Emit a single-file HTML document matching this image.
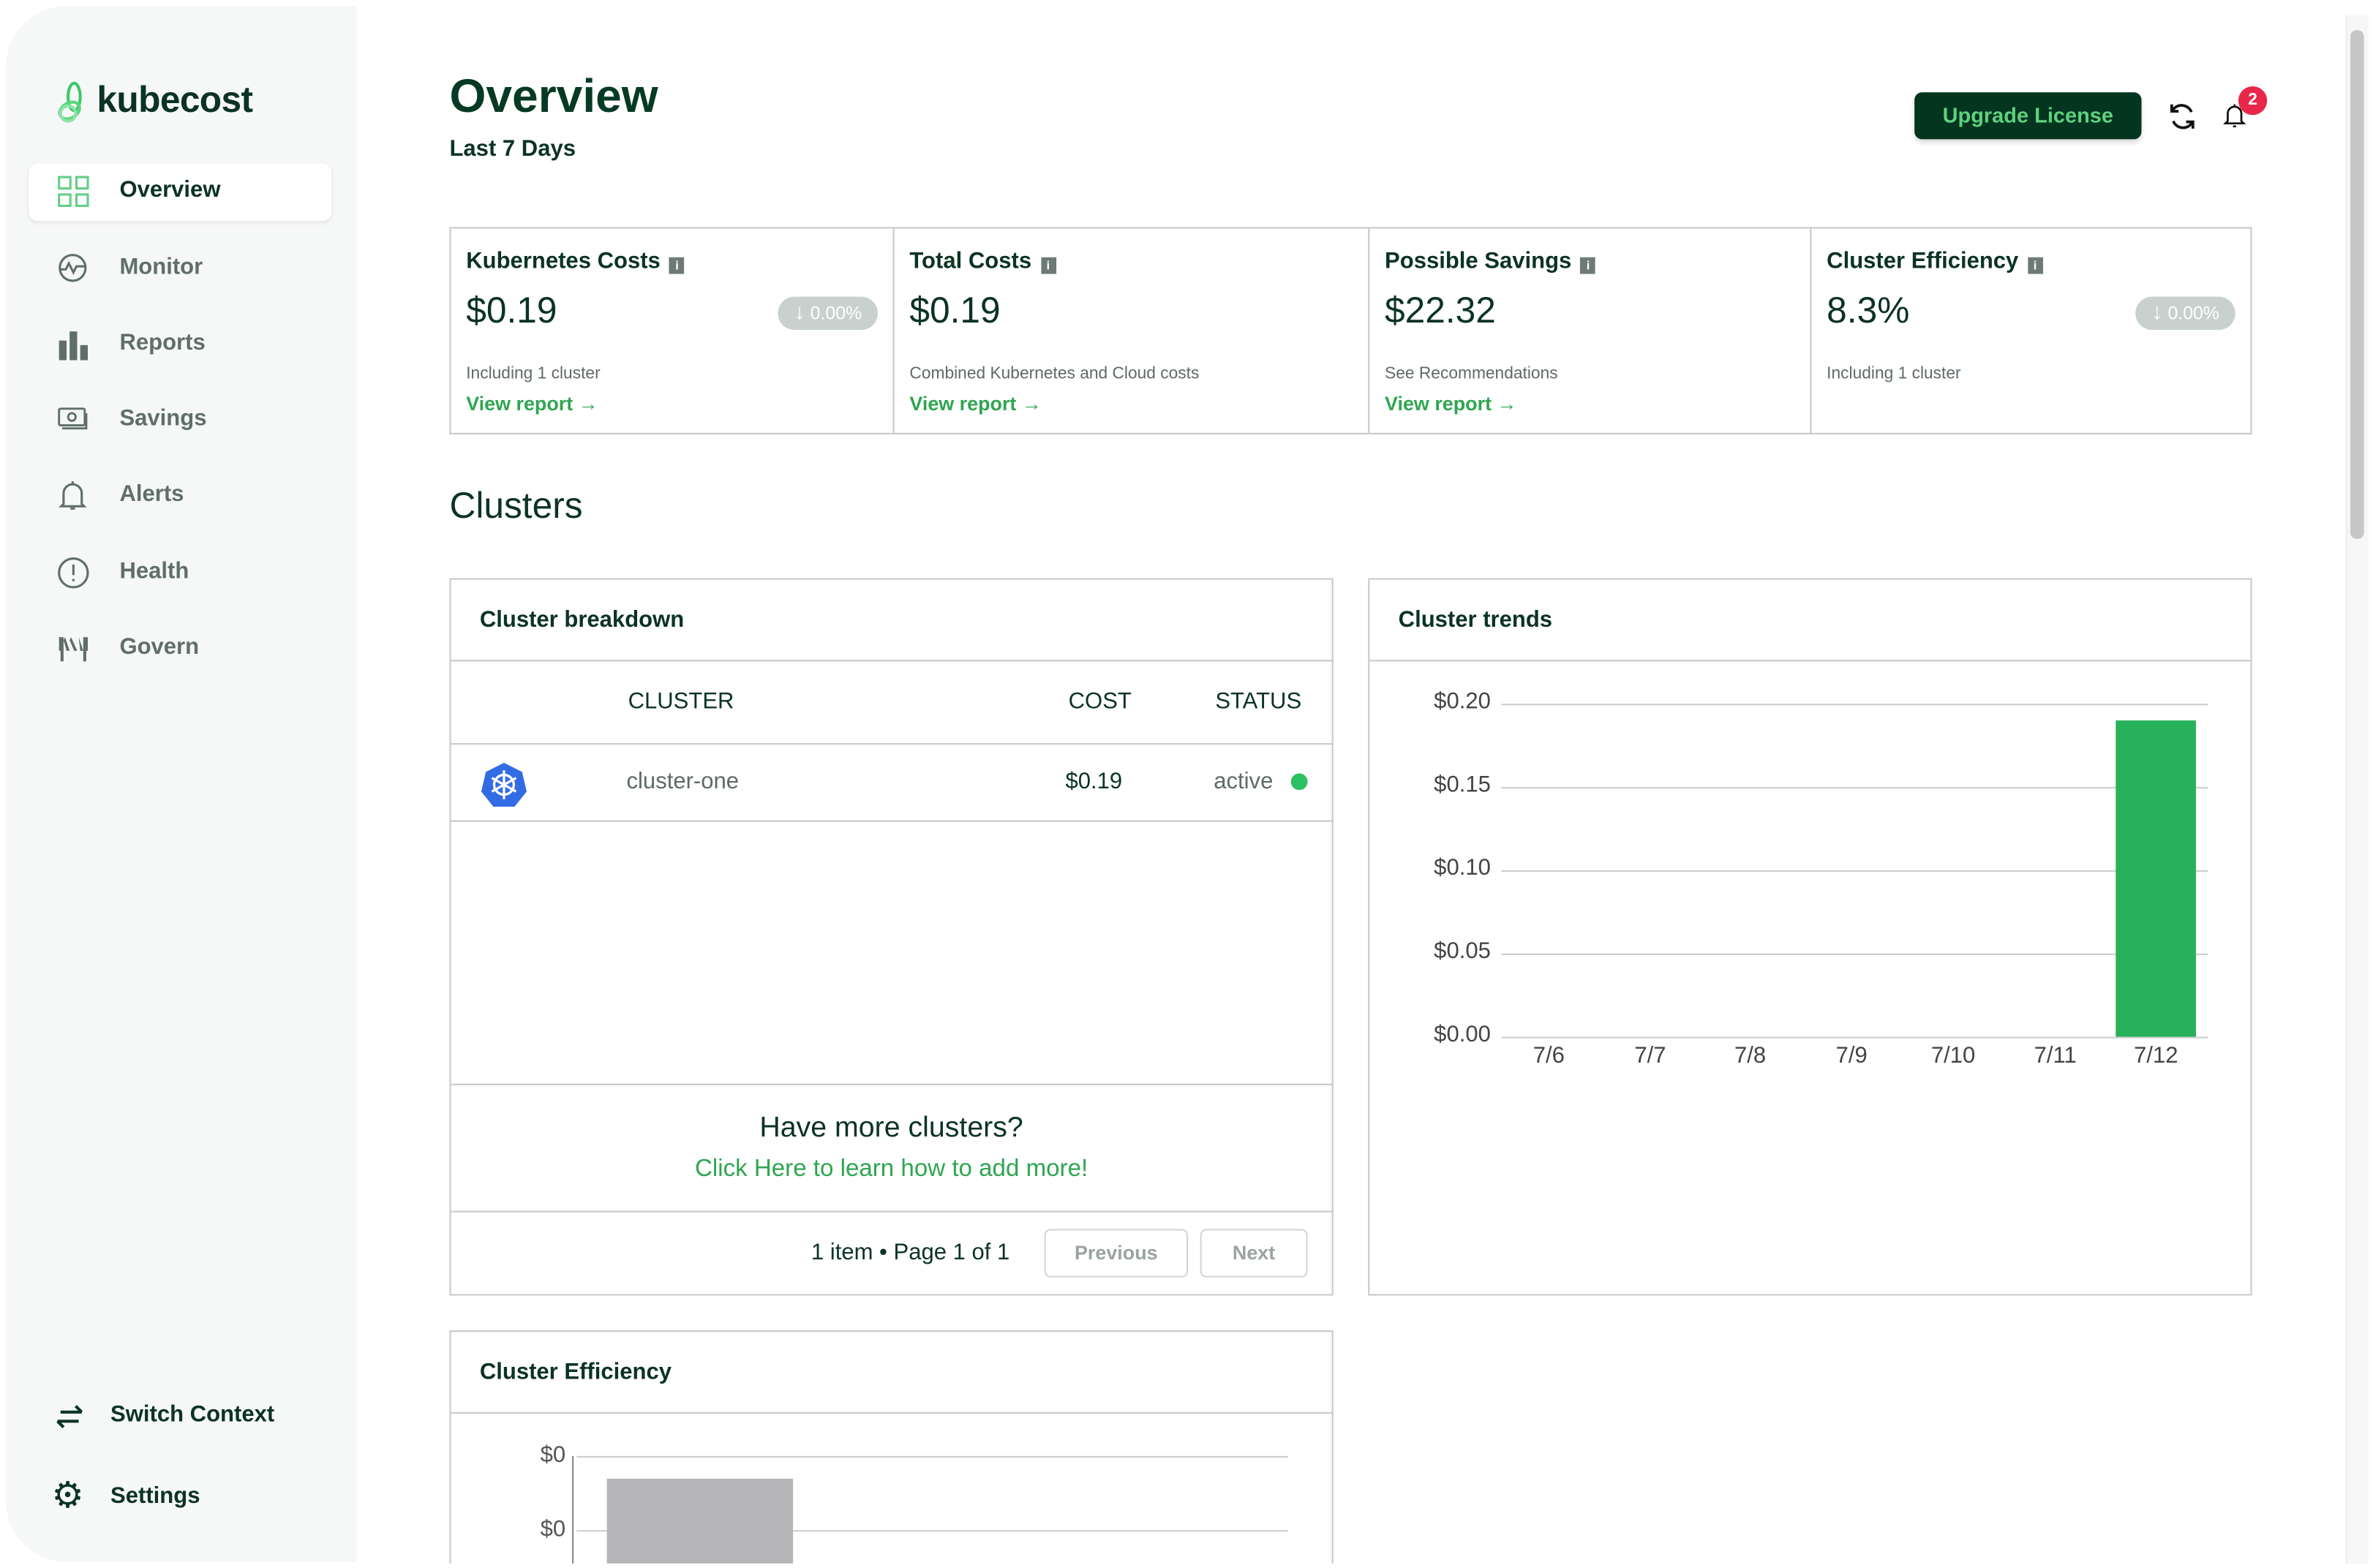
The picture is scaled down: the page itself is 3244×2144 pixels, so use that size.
<!DOCTYPE html>
<html><head><meta charset="utf-8"><style>
*{box-sizing:border-box;margin:0;padding:0}
html,body{width:3244px;height:2144px;overflow:hidden;background:#fff}
#w{position:absolute;left:0;top:0;width:1568px;height:1033px;overflow:hidden;transform:scale(2.0689,2.0695);transform-origin:0 0;font-family:"Liberation Sans",sans-serif;color:#0b3323;background:#fff}
.a{position:absolute}
.side{left:4px;top:4px;width:232px;height:1028px;background:#f6f7f7;border-radius:40px 0 0 40px}
.nav{position:absolute;left:79px;font-size:15px;font-weight:bold;color:#5f6f68}
.ni{position:absolute;left:38px}
.card{position:absolute;top:150px;height:137px;border:1px solid #c8c8c8;background:#fff}
.ct{position:absolute;left:10px;top:13px;font-size:15px;font-weight:bold;color:#0b3323;white-space:nowrap}
.ct i{display:inline-block;width:10px;height:11px;background:#6d7a76;color:#fff;font-size:8px;font-style:normal;text-align:center;line-height:11px;margin-left:6px;vertical-align:-1px}
.cv{position:absolute;left:10px;top:41px;font-size:24px;color:#0b3323}
.cs{position:absolute;left:10px;top:90px;font-size:11px;color:#5f6a66;white-space:nowrap}
.cr{position:absolute;left:10px;top:108px;font-size:13px;font-weight:bold;color:#2ea650;white-space:nowrap}
.bd{position:absolute;right:10px;top:45px;width:66px;height:22px;border-radius:11px;background:#c9d1ce;color:#fff;font-size:12px;line-height:22px;text-align:center}
.bd b{font-size:15px;font-weight:normal}
.pan{position:absolute;border:1px solid #c8c8c8;background:#fff}
.ph{position:absolute;left:0;right:0;top:0;height:54px;border-bottom:1px solid #c8c8c8;font-size:15px;font-weight:bold;padding:18px 0 0 19px}
.hl{position:absolute;height:1px;background:#c8c8c8;left:0;right:0}
.yl{position:absolute;font-size:15px;color:#444;text-align:right;width:50px}
.gl{position:absolute;left:992px;width:467px;height:1px;background:#ccc}
.xl{position:absolute;top:689px;font-size:15px;color:#444}
.btn{position:absolute;top:812px;height:32px;border:1px solid #d5d5d5;border-radius:4px;font-size:13px;font-weight:bold;color:#9aa3a0;text-align:center;line-height:30px}
</style></head><body><div id="w">
<div class="a side"></div>
<svg class="a" style="left:37px;top:54px" width="22" height="28" viewBox="0 0 22 28"><ellipse cx="12" cy="10" rx="4" ry="9" fill="none" stroke="#3ec86a" stroke-width="2"/><ellipse cx="9" cy="19" rx="7" ry="5" fill="none" stroke="#58d77f" stroke-width="2" transform="rotate(-30 9 19)"/><circle cx="8" cy="21" r="5" fill="none" stroke="#8fe3a6" stroke-width="2"/></svg>
<div class="a" style="left:64px;top:53px;font-size:24px;font-weight:bold;color:#0b3323;letter-spacing:-0.3px">kubecost</div>
<div class="a" style="left:19px;top:108px;width:200px;height:38px;background:#fff;border-radius:6px;box-shadow:0 1px 3px rgba(0,0,0,.08)"></div>
<svg class="ni" style="top:116px" width="21" height="21" viewBox="0 0 21 21" fill="none" stroke="#62cf86" stroke-width="1.5"><rect x="1" y="1" width="7.5" height="7.5"/><rect x="12.5" y="1" width="7.5" height="7.5"/><rect x="1" y="12.5" width="7.5" height="7.5"/><rect x="12.5" y="12.5" width="7.5" height="7.5"/></svg>
<div class="nav" style="top:117px;color:#0b3323">Overview</div>
<svg class="ni" style="top:167px" width="20" height="20" viewBox="0 0 20 20" fill="none" stroke="#5f6f68" stroke-width="1.5"><circle cx="10" cy="10" r="8.5"/><path d="M1.5 11h4l2-4 3 6 2-4h6"/></svg>
<div class="nav" style="top:168px">Monitor</div>
<svg class="ni" style="top:218px" width="21" height="20" viewBox="0 0 21 20" fill="#5f6f68"><rect x="1" y="7" width="5" height="13"/><rect x="8" y="1" width="5" height="19"/><rect x="15" y="10" width="5" height="10"/></svg>
<div class="nav" style="top:218px">Reports</div>
<svg class="ni" style="top:268px" width="21" height="18" viewBox="0 0 21 18" fill="none" stroke="#5f6f68" stroke-width="1.4"><rect x="1" y="2" width="17" height="11" rx="1"/><circle cx="9.5" cy="7.5" r="2.5"/><path d="M3 15h16V5"/></svg>
<div class="nav" style="top:268px">Savings</div>
<svg class="ni" style="top:317px" width="20" height="21" viewBox="0 0 20 21" fill="none" stroke="#5f6f68" stroke-width="1.5"><path d="M4 16V9a6 6 0 0112 0v7l1.5 1.5h-15z"/><path d="M10 1v2M8.5 19h3"/></svg>
<div class="nav" style="top:318px">Alerts</div>
<svg class="ni" style="top:368px" width="21" height="21" viewBox="0 0 21 21" fill="none" stroke="#5f6f68" stroke-width="1.5"><circle cx="10.5" cy="10.5" r="9.5"/><path d="M10.5 5v7M10.5 14.5v1.5"/></svg>
<div class="nav" style="top:369px">Health</div>
<svg class="ni" style="top:420px" width="21" height="18" viewBox="0 0 21 18" fill="#5f6f68"><path d="M1 1h3v9H1zM5 1l3 9h-2L4 3zM9 1l4 9h-2L8 3zM14 1l3 9h-2zM17 1h3v9h-3zM2 10h2v7H2zM17 10h2v7h-2z"/></svg>
<div class="nav" style="top:419px">Govern</div>
<svg class="a" style="left:36px;top:928px" width="20" height="16" viewBox="0 0 20 16" fill="none" stroke="#0b3323" stroke-width="2"><path d="M4 5h14M14 1l4 4M16 11H2M6 15l-4-4"/></svg>
<div class="a" style="left:73px;top:926px;font-size:15px;font-weight:bold;color:#0b3323">Switch Context</div>
<div class="a" style="left:34px;top:975px;font-size:24px;line-height:28px;color:#0b3323">⚙</div>
<div class="a" style="left:73px;top:980px;font-size:15px;font-weight:bold;color:#0b3323">Settings</div>
<div class="a" style="left:1550px;top:10px;width:15px;height:1026px;background:#f7f7f8;border-left:1px solid #ececec"></div>
<div class="a" style="left:1553px;top:20px;width:9px;height:336px;background:#c6c5c8;border-radius:4px"></div>
<div class="a" style="left:297px;top:46px;font-size:31px;font-weight:bold;color:#063a25">Overview</div>
<div class="a" style="left:297px;top:90px;font-size:15px;font-weight:bold;color:#0b3323">Last 7 Days</div>
<div class="a" style="left:1265px;top:61px;width:150px;height:31px;background:#03351f;border-radius:5px;color:#5ed27f;font-size:14px;font-weight:bold;text-align:center;line-height:31px;box-shadow:0 2px 3px rgba(0,0,0,.15)">Upgrade License</div>
<svg class="a" style="left:1432px;top:67px" width="20" height="20" viewBox="0 0 20 20" fill="none" stroke="#111" stroke-width="1.8"><path d="M16 7A7 7 0 003.5 6M4 13a7 7 0 0012.5 1"/><path d="M3 2v4.5h4.5M17 18v-4.5h-4.5"/></svg>
<svg class="a" style="left:1469px;top:67px" width="15" height="18" viewBox="0 0 15 18" fill="none" stroke="#111" stroke-width="1.3"><path d="M3 13V8a4.5 4.5 0 019 0v5l1.5 1.5h-12z"/><path d="M7.5 2v1.5M6.5 16.5h2"/></svg>
<div class="a" style="left:1479px;top:57px;width:19px;height:19px;border-radius:50%;background:#e8274b;color:#fff;font-size:11px;font-weight:bold;text-align:center;line-height:19px">2</div>
<div class="card" style="left:297px;width:294px"><div class="ct">Kubernetes Costs<i>i</i></div><div class="cv">$0.19</div><div class="bd"><b>↓</b> 0.00%</div><div class="cs">Including 1 cluster</div><div class="cr">View report →</div></div>
<div class="card" style="left:590px;width:315px"><div class="ct">Total Costs<i>i</i></div><div class="cv">$0.19</div><div class="cs">Combined Kubernetes and Cloud costs</div><div class="cr">View report →</div></div>
<div class="card" style="left:904px;width:293px"><div class="ct">Possible Savings<i>i</i></div><div class="cv">$22.32</div><div class="cs">See Recommendations</div><div class="cr">View report →</div></div>
<div class="card" style="left:1196px;width:292px"><div class="ct">Cluster Efficiency<i>i</i></div><div class="cv">8.3%</div><div class="bd"><b>↓</b> 0.00%</div><div class="cs">Including 1 cluster</div></div>
<div class="a" style="left:297px;top:321px;font-size:24px;color:#0b3323">Clusters</div>
<div class="pan" style="left:297px;top:382px;width:584px;height:474px">
<div class="ph">Cluster breakdown</div>
<div class="hl" style="top:108px"></div><div class="hl" style="top:159px"></div><div class="hl" style="top:333px"></div><div class="hl" style="top:417px"></div>
<div class="a" style="left:117px;top:72px;font-size:15px">CLUSTER</div>
<div class="a" style="left:408px;top:72px;font-size:15px">COST</div>
<div class="a" style="left:505px;top:72px;font-size:15px">STATUS</div>
<svg class="a" style="left:20px;top:120px" width="30" height="30" viewBox="0 0 30 30"><path d="M15 1l12 6 3 13-8 10H8L0 20 3 7z" fill="#326ce5"/><g stroke="#fff" stroke-width="1.6" fill="none"><circle cx="15" cy="15.5" r="6.5"/><path d="M15 6v19M7 11l16 9M7 20l16-9"/></g></svg>
<div class="a" style="left:116px;top:125px;font-size:15px;color:#5f6a66">cluster-one</div>
<div class="a" style="left:406px;top:125px;font-size:15px;color:#0b3323">$0.19</div>
<div class="a" style="left:504px;top:125px;font-size:15px;color:#5f6a66">active</div>
<div class="a" style="left:555px;top:128px;width:11px;height:11px;border-radius:50%;background:#2bc062"></div>
<div class="a" style="left:0;right:0;top:352px;text-align:center;font-size:19px;color:#0b3323">Have more clusters?</div>
<div class="a" style="left:0;right:0;top:381px;text-align:center;font-size:16px;color:#2ea650">Click Here to learn how to add more!</div>
<div class="a" style="left:238px;top:436px;font-size:15px;color:#0b3323">1 item • Page 1 of 1</div>
</div>
<div class="btn" style="left:690px;width:95px">Previous</div>
<div class="btn" style="left:793px;width:71px">Next</div>
<div class="pan" style="left:904px;top:382px;width:584px;height:474px"><div class="ph">Cluster trends</div></div>
<div class="yl" style="left:935px;top:455px">$0.20</div>
<div class="yl" style="left:935px;top:510px">$0.15</div>
<div class="yl" style="left:935px;top:565px">$0.10</div>
<div class="yl" style="left:935px;top:620px">$0.05</div>
<div class="yl" style="left:935px;top:675px">$0.00</div>
<div class="gl" style="top:465px"></div><div class="gl" style="top:520px"></div><div class="gl" style="top:575px"></div><div class="gl" style="top:630px"></div><div class="gl" style="top:685px"></div>
<div class="xl" style="left:1013px">7/6</div><div class="xl" style="left:1080px">7/7</div><div class="xl" style="left:1146px">7/8</div><div class="xl" style="left:1213px">7/9</div><div class="xl" style="left:1276px">7/10</div><div class="xl" style="left:1344px">7/11</div><div class="xl" style="left:1410px">7/12</div>
<div class="a" style="left:1398px;top:476px;width:53px;height:209px;background:#27b15a"></div>
<div class="pan" style="left:297px;top:879px;width:584px;height:200px"><div class="ph">Cluster Efficiency</div></div>
<div class="a" style="left:357px;top:953px;font-size:15px;color:#555">$0</div>
<div class="a" style="left:357px;top:1002px;font-size:15px;color:#555">$0</div>
<div class="a" style="left:378px;top:962px;width:1px;height:80px;background:#888"></div>
<div class="a" style="left:381px;top:962px;width:470px;height:1px;background:#ccc"></div>
<div class="a" style="left:381px;top:1011px;width:470px;height:1px;background:#ccc"></div>
<div class="a" style="left:401px;top:977px;width:123px;height:80px;background:#b5b4b7"></div>
</div></body></html>
